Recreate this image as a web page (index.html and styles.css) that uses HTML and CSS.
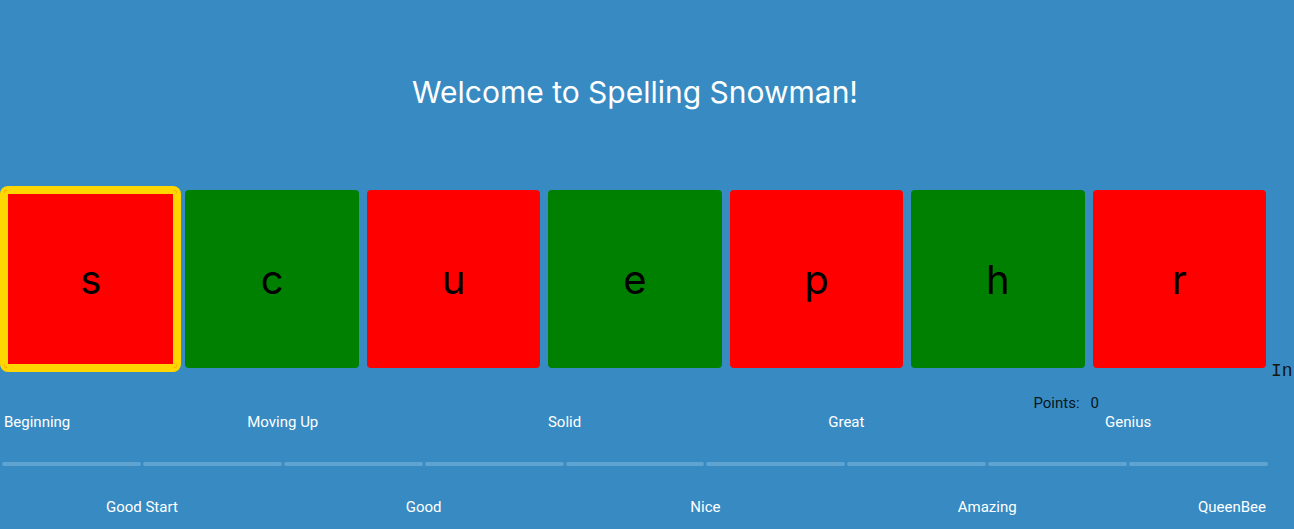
FILE: index.html
```html
<!DOCTYPE html>
<html lang="en">
<head>
<meta charset="utf-8">
<title>Spelling Snowman</title>
<link rel="stylesheet" href="styles.css">
</head>
<body>
<div class="app">
  <h1 class="title">Welcome to Spelling Snowman!</h1>
  <div class="board">
    <div class="tiles">
      <div class="tile red selected">s</div>
      <div class="tile green">c</div>
      <div class="tile red">u</div>
      <div class="tile green">e</div>
      <div class="tile red">p</div>
      <div class="tile green">h</div>
      <div class="tile red">r</div>
    </div>
    <span class="hint">In</span>
  </div>
  <div class="points"><span class="points-label">Points:</span><span class="points-value">0</span></div>
  <div class="ranks">
    <div class="labels top">
      <span class="lbl first">Beginning</span>
      <span class="lbl c2">Moving Up</span>
      <span class="lbl c4">Solid</span>
      <span class="lbl c6">Great</span>
      <span class="lbl c8">Genius</span>
    </div>
    <div class="rail">
      <span class="seg"></span><span class="seg"></span><span class="seg"></span>
      <span class="seg"></span><span class="seg"></span><span class="seg"></span>
      <span class="seg"></span><span class="seg"></span><span class="seg"></span>
    </div>
    <div class="labels bottom">
      <span class="lbl c1">Good Start</span>
      <span class="lbl c3">Good</span>
      <span class="lbl c5">Nice</span>
      <span class="lbl c7">Amazing</span>
      <span class="lbl last">QueenBee</span>
    </div>
  </div>
</div>
</body>
</html>
```

FILE: styles.css
```css
html, body {
  margin: 0;
  padding: 0;
}
body {
  background: #378bc2;
  overflow: hidden;
  font-family: Roboto, "Liberation Sans", sans-serif;
  height: 529px;
}
.app {
  width: 1270px;
}
.title {
  margin: 74px 0 0;
  font-family: Inter, "Liberation Sans", sans-serif;
  font-weight: 400;
  font-size: 30px;
  line-height: 36px;
  color: #ffffff;
  text-align: center;
}
.board {
  display: flex;
  align-items: flex-end;
  margin-top: 76px;
  width: 1294px;
}
.tiles {
  display: flex;
  width: 1270px;
  flex: none;
}
.tile {
  flex: 1 1 0;
  height: 178px;
  margin: 4px;
  border-radius: 4px;
  display: flex;
  align-items: center;
  justify-content: center;
  font-family: Inter, "Liberation Sans", sans-serif;
  font-size: 40px;
  color: #000;
  padding-top: 1px;
  box-sizing: border-box;
}
.red { background: #ff0000; }
.green { background: #008000; }
.selected {
  box-shadow: 0 0 0 4px #ffd700, inset 0 0 0 4px #ffd700;
  border-radius: 4px;
}
.hint {
  font-family: "Liberation Mono", monospace;
  font-size: 18px;
  line-height: 20px;
  color: #151515;
  white-space: nowrap;
  margin-left: 1px;
  margin-bottom: -9px;
}
.points {
  display: flex;
  justify-content: flex-end;
  padding-right: 171px;
  margin-top: 23px;
  font-size: 15px;
  line-height: 16px;
  color: rgba(0, 0, 0, 0.87);
}
.points-value {
  margin-left: 11px;
}
.ranks {
  padding: 0 1px;
  width: 1268px;
  box-sizing: border-box;
  margin-left: 1px;
}
.labels {
  display: grid;
  grid-template-columns: repeat(9, 1fr);
  column-gap: 2px;
  font-size: 15px;
  line-height: 16px;
  color: #ffffff;
}
.labels.top {
  margin-top: 3px;
}
.labels.bottom {
  margin-top: 33px;
}
.lbl {
  justify-self: center;
  white-space: nowrap;
}
.first { grid-column: 1 / 2; justify-self: start; padding-left: 2px; }
.last { grid-column: 9 / 10; justify-self: end; padding-right: 2px; }
.c1 { grid-column: 1 / 3; }
.c2 { grid-column: 2 / 4; }
.c3 { grid-column: 3 / 5; }
.c4 { grid-column: 4 / 6; }
.c5 { grid-column: 5 / 7; }
.c6 { grid-column: 6 / 8; }
.c7 { grid-column: 7 / 9; }
.c8 { grid-column: 8 / 10; }
.rail {
  display: grid;
  grid-template-columns: repeat(9, 1fr);
  column-gap: 2px;
  margin-top: 32px;
  height: 4px;
}
.seg {
  background: #5fa3d1;
  border-radius: 2px;
}
```
